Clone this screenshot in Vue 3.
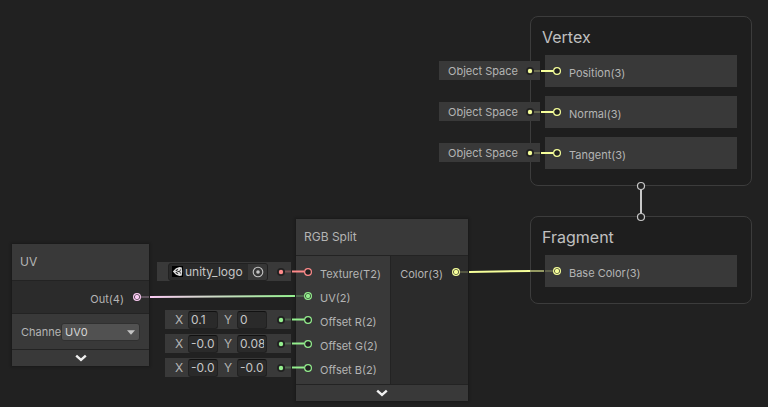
<script setup>
import { h, ref } from 'vue'

const YELLOW = '#f6ff9a'
const GREEN = '#94ef8e'
const PINK = '#fbcbf4'
const RED = '#ff8b8b'

const Port = (props) =>
  h('svg', { class: 'port', width: 8, height: 8, viewBox: '0 0 8 8', 'aria-hidden': 'true' }, [
    h('circle', { cx: 4, cy: 4, r: 3.4, fill: '#212121', stroke: props.color, 'stroke-width': 1.2 }),
    props.filled ? h('circle', { cx: 4, cy: 4, r: 2.2, fill: props.color }) : null
  ])
Port.props = ['color', 'filled']

const Dot = (props) =>
  h('svg', { class: 'dot', width: 8, height: 8, viewBox: '0 0 8 8', 'aria-hidden': 'true' }, [
    h('circle', { cx: 4, cy: 4, r: 4, fill: '#212121' }),
    h('circle', { cx: 4, cy: 4, r: 2.2, fill: props.color })
  ])
Dot.props = ['color']

const Chevron = () =>
  h('svg', { width: 12, height: 8, viewBox: '0 0 12 8', 'aria-hidden': 'true' }, [
    h('path', { d: 'M1.2 1.6L6 5.9L10.8 1.6', fill: 'none', stroke: '#f0f0f0', 'stroke-width': 2.4 })
  ])

const vertexBlocks = ['Position(3)', 'Normal(3)', 'Tangent(3)']
const spaces = ['s1', 's2', 's3']

const inputs = [
  { name: 'Texture(T2)', color: RED, filled: false },
  { name: 'UV(2)', color: GREEN, filled: true },
  { name: 'Offset R(2)', color: GREEN, filled: false },
  { name: 'Offset G(2)', color: GREEN, filled: false },
  { name: 'Offset B(2)', color: GREEN, filled: false }
]

const offsets = ref([
  { id: 'r', x: '0.1', y: '0' },
  { id: 'g', x: '-0.0', y: '0.08' },
  { id: 'b', x: '-0.0', y: '-0.0' }
])

const channel = ref('UV0')
</script>

<template>
  <main class="graph">
    <section class="stack vertex">
      <h2>Vertex</h2>
      <div v-for="b in vertexBlocks" :key="b" class="block">
        <Port :color="YELLOW" /><span class="port-name">{{ b }}</span>
      </div>
    </section>

    <section class="stack fragment">
      <h2>Fragment</h2>
      <div class="block">
        <Port :color="YELLOW" :filled="true" /><span class="port-name">Base Color(3)</span>
      </div>
    </section>

    <div class="spaces">
      <div v-for="s in spaces" :key="s" class="pill">
        <span class="space-name">Object Space</span><Dot :color="YELLOW" />
      </div>
    </div>

    <section class="node uv">
      <header>UV</header>
      <div class="out">
        <span class="port-name">Out(4)</span><Port :color="PINK" :filled="true" />
      </div>
      <div class="setting">
        <label for="channel">Channel</label>
        <div class="dropdown">
          <select id="channel" v-model="channel">
            <option>UV0</option>
            <option>UV1</option>
            <option>UV2</option>
            <option>UV3</option>
          </select>
          <svg class="caret" width="8" height="5" viewBox="0 0 8 5" aria-hidden="true">
            <path d="M0 0.3H8L4 4.7Z" fill="#c4c4c4" />
          </svg>
        </div>
      </div>
      <button class="fold" type="button" aria-label="Collapse UV"><Chevron /></button>
    </section>

    <section class="node split">
      <header>RGB Split</header>
      <div class="body">
        <div class="ins">
          <div v-for="i in inputs" :key="i.name" class="row">
            <Port :color="i.color" :filled="i.filled" /><span class="port-name">{{ i.name }}</span>
          </div>
        </div>
        <div class="outs">
          <div class="row">
            <span class="port-name">Color(3)</span><Port :color="YELLOW" :filled="true" />
          </div>
        </div>
      </div>
      <button class="fold" type="button" aria-label="Collapse RGB Split"><Chevron /></button>
    </section>

    <div class="pill texture">
      <div class="object-field">
        <svg class="thumb" width="11" height="11" viewBox="0 0 11 11" aria-hidden="true">
          <rect width="11" height="11" fill="#000000" />
          <path d="M0.8 5.5L4 2.2L7.6 0.9L9.8 1.6L10.2 5.5L9.8 9.4L7.6 10.1L4 8.8Z" fill="#dcdcdc" />
          <path d="M3.8 4.7L6 3.4M3.8 6.3L6 7.6" stroke="#222222" stroke-width="1.1" />
          <path d="M5.4 5.5H7.6L8.7 3.4M7.6 5.5L8.7 7.6" fill="none" stroke="#333333" stroke-width="1" />
        </svg>
        <span class="asset">unity_logo</span>
        <button class="picker" type="button" aria-label="Select texture">
          <svg width="12" height="12" viewBox="0 0 12 12" aria-hidden="true">
            <circle cx="6" cy="6" r="4.8" fill="none" stroke="#c4c4c4" stroke-width="1.1" />
            <circle cx="6" cy="6" r="1.8" fill="#c4c4c4" />
          </svg>
        </button>
      </div>
      <Dot :color="RED" />
    </div>

    <div class="offsets">
      <div v-for="o in offsets" :key="o.id" class="pill vector">
        <label :for="o.id + 'x'">X</label>
        <input :id="o.id + 'x'" v-model="o.x" type="text" />
        <label :for="o.id + 'y'">Y</label>
        <input :id="o.id + 'y'" v-model="o.y" type="text" />
        <Dot :color="GREEN" />
      </div>
    </div>

    <svg class="wires" aria-hidden="true">
      <defs>
        <linearGradient id="uvwire" gradientUnits="userSpaceOnUse" x1="150" y1="0" x2="295" y2="0">
          <stop offset="0" :stop-color="PINK" />
          <stop offset="1" :stop-color="GREEN" />
        </linearGradient>
      </defs>
      <g stroke-width="2" fill="none">
        <g :stroke="YELLOW">
          <path v-for="y in [71, 112, 153]" :key="y" :d="`M541 ${y}H553`" />
          <path v-for="y in [71, 112, 153]" :key="'d' + y" :d="`M534 ${y}H540`" opacity="0.25" />
          <path d="M469 272L530 271" />
          <path d="M530 271H544" opacity="0.55" />
          <path d="M545 271H553M460 272H468" opacity="0.2" />
        </g>
        <g :stroke="GREEN">
          <path v-for="y in [320, 344, 368]" :key="y" :d="`M292 ${y - 0.5}H304`" />
          <path v-for="y in [320, 344, 368]" :key="'d' + y" :d="`M285 ${y - 0.5}H291`" opacity="0.25" />
          <path d="M296 296H304" opacity="0.25" />
        </g>
        <path d="M292 271.5H304" :stroke="RED" />
        <path d="M285 271.5H291" :stroke="RED" opacity="0.3" />
        <path d="M141 297H149" :stroke="PINK" opacity="0.25" />
        <path d="M150 297L295 296" stroke="url(#uvwire)" />
        <path d="M641 190V213" stroke="#c8c8c8" />
      </g>
      <g fill="#212121" stroke="#c8c8c8" stroke-width="1.2">
        <circle cx="641" cy="186" r="3.5" />
        <circle cx="641" cy="217" r="3.5" />
      </g>
    </svg>
  </main>
</template>

<style>
body {
  margin: 0;
  background: #212121;
}
</style>

<style scoped>
.graph {
  position: relative;
  height: 100vh;
  overflow: hidden;
  background: #212121;
  color: #b4b4b4;
  font-family: Inter, "Liberation Sans", sans-serif;
  font-size: 11px;
  line-height: 16px;
}

.graph * {
  box-sizing: border-box;
}

.graph :deep(svg) {
  display: block;
  flex: none;
}

.port-name {
  padding-top: 4px;
  white-space: nowrap;
}

.stack {
  position: absolute;
  left: 530px;
  display: flex;
  flex-direction: column;
  gap: 9px;
  width: 222px;
  padding: 10px 14px 16px;
  border: 1px solid #3c3c3c;
  border-radius: 8px;
  background: #1e1e1e;
}

.vertex {
  top: 16px;
}

.fragment {
  top: 216px;
}

h2 {
  margin: 0 0 -1px -3px;
  color: #c0c0c0;
  font-size: 16px;
  font-weight: 400;
  line-height: 20px;
}

.block {
  display: flex;
  align-items: center;
  gap: 8px;
  height: 32px;
  padding-left: 8px;
  background: #393939;
}

.pill {
  display: flex;
  align-items: center;
  height: 19px;
  background: #393939;
}

.spaces {
  position: absolute;
  left: 439px;
  top: 61px;
  display: flex;
  flex-direction: column;
  gap: 22px;
  width: 101px;
}

.spaces .pill {
  justify-content: space-between;
  padding: 0 6px 0 9px;
}

.node {
  position: absolute;
  background: #393939;
  box-shadow: 0 0 2px 1px #1a1a1a;
}

.node header {
  height: 36px;
  padding-left: 8px;
  font-size: 12px;
  line-height: 36px;
}

.uv {
  left: 12px;
  top: 244px;
  width: 137px;
}

.out {
  display: flex;
  align-items: center;
  justify-content: flex-end;
  gap: 9px;
  height: 34px;
  padding-right: 8px;
  border: solid #232323;
  border-width: 1px 0;
  background: #2b2b2b;
}

.setting {
  display: flex;
  align-items: center;
  height: 35px;
  padding: 0 9px;
}

.setting label {
  width: 40px;
  overflow: hidden;
}

.dropdown {
  position: relative;
  flex: 1;
}

select {
  display: block;
  width: 100%;
  height: 18px;
  padding: 0 3px;
  border: 1px solid #303030;
  border-radius: 3px;
  background: #515151;
  color: #d6d6d6;
  font: inherit;
  appearance: none;
}

.caret {
  position: absolute;
  right: 5px;
  top: 7px;
  pointer-events: none;
}

.fold {
  display: flex;
  align-items: center;
  justify-content: center;
  width: 100%;
  height: 17px;
  padding: 0;
  border: 0;
  border-top: 1px solid #232323;
  background: #393939;
}

.split {
  left: 296px;
  top: 219px;
  width: 172px;
}

.body {
  display: flex;
  height: 129px;
  border-top: 1px solid #232323;
}

.ins {
  flex: 1;
  padding: 4px 0 0 8px;
}

.outs {
  width: 78px;
  padding: 4px 8px 0 0;
  border-left: 1px solid #232323;
  background: #2b2b2b;
}

.row {
  display: flex;
  align-items: center;
  gap: 8px;
  height: 24px;
}

.outs .row {
  justify-content: flex-end;
  gap: 9px;
}

.texture {
  position: absolute;
  left: 157px;
  top: 262px;
  width: 134px;
  justify-content: space-between;
  padding: 0 6px 0 11px;
}

.object-field {
  display: flex;
  align-items: center;
  width: 100px;
  height: 18px;
  padding-left: 3px;
  border: 1px solid #212121;
  border-radius: 3px;
  background: #2a2a2a;
  color: #c6c6c6;
  font-size: 12px;
}

.asset {
  flex: 1;
  padding-left: 2px;
}

.picker {
  display: flex;
  align-items: center;
  justify-content: center;
  width: 19px;
  height: 16px;
  padding: 0;
  border: 0;
  border-radius: 0 2px 2px 0;
  background: #373737;
}

.offsets {
  position: absolute;
  left: 165px;
  top: 310px;
  display: flex;
  flex-direction: column;
  gap: 5px;
  width: 126px;
}

.vector {
  padding: 0 6px 0 10px;
}

.vector label {
  width: 13px;
  font-size: 12px;
}

.vector input {
  width: 30px;
  height: 18px;
  margin-right: 6px;
  padding: 0 2px;
  border: 1px solid #212121;
  border-top-color: #111111;
  border-radius: 3px;
  background: #2a2a2a;
  color: #c6c6c6;
  font: inherit;
  font-size: 12px;
}

.vector :deep(.dot) {
  margin-left: auto;
}

.wires {
  position: absolute;
  inset: 0;
  width: 100%;
  height: 100%;
  pointer-events: none;
}
</style>
